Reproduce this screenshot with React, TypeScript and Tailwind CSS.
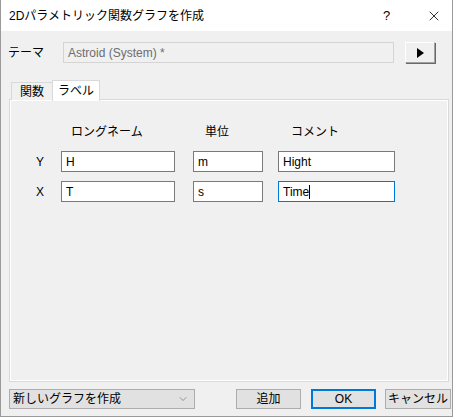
import React from 'react';
import { X, ChevronDown } from 'lucide-react';

const font = { fontFamily: '"Liberation Sans", "Noto Sans CJK JP", sans-serif' };

const TextBox: React.FC<{ value: string; width: string; focused?: boolean }> = ({ value, width, focused }) => (
  <div
    className={`${width} shrink-0 h-[21px] bg-white border flex items-center pl-[4px] text-[12px] text-black ${
      focused ? 'border-[#0078d7]' : 'border-[#7a7a7a]'
    }`}
  >
    <span>{value}</span>
    {focused && <span className="w-px h-[14px] bg-black" />}
  </div>
);

const PushButton: React.FC<{ label: string; width: string; primary?: boolean }> = ({ label, width, primary }) => (
  <div
    className={`${width} shrink-0 h-[20px] flex items-center justify-center bg-[#e1e1e1] text-[12px] text-black ${
      primary ? 'border-2 border-[#0078d7]' : 'border border-[#adadad]'
    }`}
  >
    {label}
  </div>
);

export default function App() {
  return (
    <div className="w-[455px] h-[418px] bg-white" style={font}>
      <div className="w-[453px] h-[417px] flex flex-col border-l border-r border-b border-[#9a9a9a] bg-[#f0f0f0]">
        {/* Title bar */}
        <div className="h-[31px] bg-white flex items-center pl-[8px] pr-[10px] text-[12px] text-black">
          <span className="flex-1">2Dパラメトリック関数グラフを作成</span>
          <span className="w-[10px] text-[13px] mr-[33px]">?</span>
          <X size={16} strokeWidth={1.2} className="text-black" />
        </div>

        <div className="flex-1 flex flex-col pl-[7px]">
          {/* Theme row */}
          <div className="mt-[11px] h-[21px] flex items-center">
            <span className="w-[55px] shrink-0 text-[12px] text-black">テーマ</span>
            <div className="w-[331px] shrink-0 h-[21px] border border-[#d4d4d4] bg-[#f0f0f0] flex items-center pl-[4px] text-[12px] text-[#6d6d6d]">
              Astroid (System) *
            </div>
            <div className="ml-[11px] w-[30px] shrink-0 h-[21px] bg-[#f0f0f0] border-t border-l border-white shadow-[1px_1px_0_#696969] border-r border-b border-r-[#a0a0a0] border-b-[#a0a0a0] flex items-center justify-center">
              <svg width="8" height="10" viewBox="0 0 8 10">
                <path d="M1 0 L8 5 L1 10 Z" fill="#000" />
              </svg>
            </div>
          </div>

          {/* Tabs */}
          <div className="mt-[17px] flex items-end pl-[3px] h-[20px] relative z-10">
            <div className="w-[41px] h-[18px] border-t border-l border-[#d9d9d9] bg-[#f0f0f0] text-[12px] text-black flex items-center justify-center">
              関数
            </div>
            <div className="w-[48px] h-[21px] -mb-px border-t border-l border-r border-[#d9d9d9] bg-white text-[12px] text-black flex items-center justify-center">
              ラベル
            </div>
          </div>

          {/* Tab panel */}
          <div className="ml-px w-[440px] h-[283px] -mt-px border border-[#d9d9d9]">
            <div className="h-full border border-white flex flex-col">
              <div className="mt-[22px] h-[16px] flex text-[12px] text-black">
                <span className="ml-[60px] w-[134px]">ロングネーム</span>
                <span className="w-[86px]">単位</span>
                <span>コメント</span>
              </div>
              <div className="mt-[12px] flex items-center">
                <span className="w-[50px] pl-[25px] text-[12px] text-black">Y</span>
                <TextBox value="H" width="w-[114px]" />
                <div className="w-[18px]" />
                <TextBox value="m" width="w-[70px]" />
                <div className="w-[15px]" />
                <TextBox value="Hight" width="w-[117px]" />
              </div>
              <div className="mt-[9px] flex items-center">
                <span className="w-[50px] pl-[25px] text-[12px] text-black">X</span>
                <TextBox value="T" width="w-[114px]" />
                <div className="w-[18px]" />
                <TextBox value="s" width="w-[70px]" />
                <div className="w-[15px]" />
                <TextBox value="Time" width="w-[117px]" focused />
              </div>
            </div>
          </div>

          {/* Bottom row */}
          <div className="mt-[7px] flex items-center">
            <div className="ml-px w-[186px] shrink-0 h-[20px] bg-[#e1e1e1] border border-[#adadad] flex items-center pl-[3px] pr-[5px] text-[12px] text-black">
              <span className="flex-1">新しいグラフを作成</span>
              <ChevronDown size={12} strokeWidth={1.2} className="text-[#606060]" />
            </div>
            <div className="ml-[41px]">
              <PushButton label="追加" width="w-[65px]" />
            </div>
            <div className="ml-[10px]">
              <PushButton label="OK" width="w-[65px]" primary />
            </div>
            <div className="ml-[9px]">
              <PushButton label="キャンセル" width="w-[66px]" />
            </div>
          </div>
        </div>
      </div>
    </div>
  );
}
